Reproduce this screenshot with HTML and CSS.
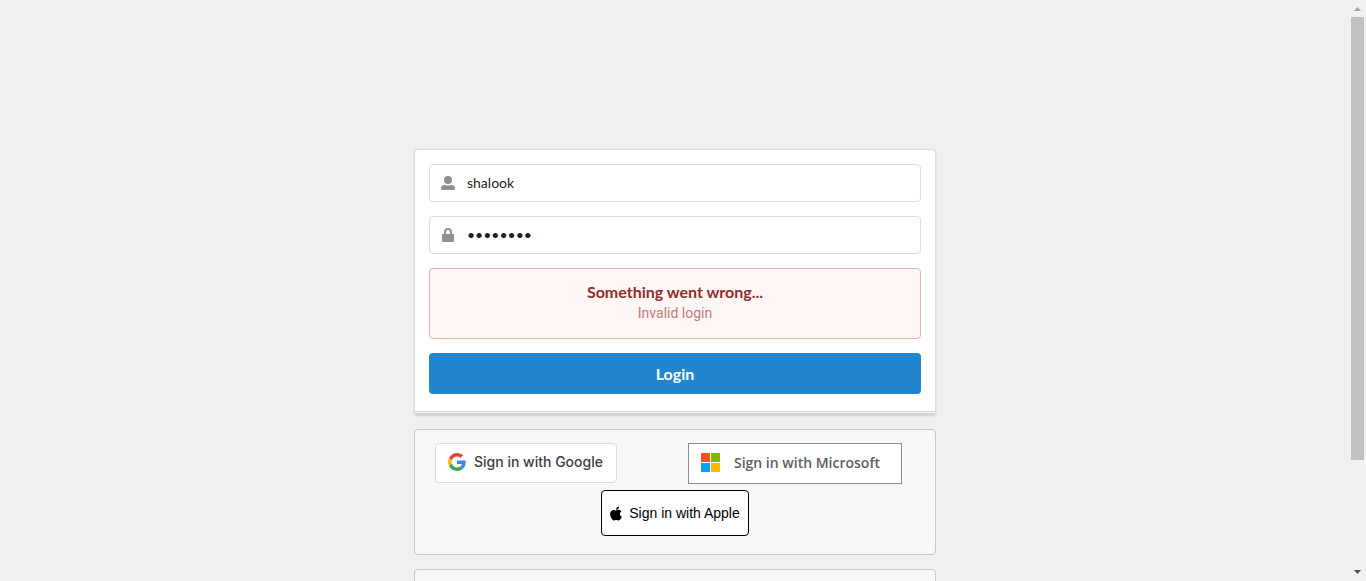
FILE: index.html
```html
<!DOCTYPE html>
<html lang="en">
<head>
<meta charset="utf-8">
<title>Login</title>
<meta name="viewport" content="width=device-width, initial-scale=1">
<link rel="stylesheet" href="styles.css">
</head>
<body>
<main class="column">
  <form class="card">
    <div class="fields">
      <label class="field">
        <svg class="field-icon" viewBox="0 0 14 14" aria-hidden="true"><circle cx="7" cy="4" r="4"/><path d="M3.500 9h1c1.500.7 3.500.7 5 0h1A3.500 3.500 0 0 1 14 12.500c0 .9-.5 1.500-1.300 1.500H1.300C.5 14 0 13.400 0 12.500A3.500 3.500 0 0 1 3.500 9z"/></svg>
        <input class="input" type="text" aria-label="Username" value="shalook">
      </label>
      <label class="field">
        <svg class="field-icon" viewBox="0 0 14 14" aria-hidden="true"><path fill-rule="evenodd" d="M3 6V4a4 4 0 0 1 8 0v2h.7c.8 0 1.300.5 1.300 1.300v5.400c0 .8-.5 1.300-1.300 1.300H2.300C1.500 14 1 13.500 1 12.700V7.300C1 6.500 1.500 6 2.300 6zM5 6h4V4a2 2 0 0 0-4 0z"/></svg>
        <input class="input" type="password" aria-label="Password" value="password">
      </label>
      <div class="message" role="alert">
        <div class="message-title">Something went wrong...</div>
        <p class="message-text">Invalid login</p>
      </div>
      <button class="login" type="button">Login</button>
    </div>
    <div class="card-foot"></div>
  </form>
  <section class="panel" aria-label="Other sign in options">
    <div class="providers">
      <button class="google" type="button">
        <svg class="google-logo" viewBox="0 0 48 48" aria-hidden="true"><path fill="#ea4335" d="M24 9.500c3.540 0 6.710 1.220 9.210 3.600l6.850-6.850C35.900 2.380 30.470 0 24 0 14.620 0 6.510 5.380 2.560 13.220l7.980 6.190C12.430 13.720 17.740 9.500 24 9.500z"/><path fill="#4285f4" d="M46.980 24.550c0-1.570-.15-3.090-.38-4.550H24v9.020h12.940c-.58 2.960-2.260 5.480-4.780 7.180l7.730 6c4.510-4.180 7.090-10.360 7.090-17.650z"/><path fill="#fbbc05" d="M10.530 28.590A14.500 14.500 0 0 1 9.770 24c0-1.600.27-3.140.76-4.590l-7.980-6.190A23.900 23.900 0 0 0 0 24c0 3.880.92 7.540 2.560 10.780z"/><path fill="#34a853" d="M24 48c6.480 0 11.930-2.130 15.890-5.810l-7.730-6c-2.150 1.450-4.920 2.300-8.160 2.300-6.260 0-11.570-4.220-13.470-9.910l-7.980 6.190C6.510 42.620 14.620 48 24 48z"/></svg>
        <span>Sign in with Google</span>
      </button>
      <button class="microsoft" type="button">
        <svg class="microsoft-logo" viewBox="0 0 19 19" aria-hidden="true"><path fill="#f25022" d="M0 0h9v9H0z"/><path fill="#7fba00" d="M10 0h9v9h-9z"/><path fill="#00a4ef" d="M0 10h9v9H0z"/><path fill="#ffb900" d="M10 10h9v9h-9z"/></svg>
        <span>Sign in with Microsoft</span>
      </button>
    </div>
    <button class="apple" type="button">
      <svg class="apple-logo" viewBox="0 0 384 470" aria-hidden="true"><path d="M318.700 247.700c-.2-36.700 16.400-64.400 50-84.800-18.800-26.900-47.200-41.700-84.700-44.600-35.500-2.800-74.300 20.700-88.500 20.700-15 0-49.400-19.700-76.400-19.700C63.300 120.200 4 163.800 4 252.500q0 39.300 14.400 81.200c12.800 36.700 59 126.700 107.200 125.200 25.200-.6 43-17.900 75.800-17.900 31.800 0 48.300 17.900 76.400 17.900 48.600-.7 90.400-82.500 102.600-119.300-65.200-30.700-61.700-90-61.700-91.900zM262.100 83.500c27.300-32.400 24.800-61.900 24-72.500-24.100 1.400-52 16.400-67.900 34.900-17.500 19.800-27.800 44.300-25.600 71.900 26.100 2 49.900-11.400 69.500-34.300z"/></svg>
      <span>Sign in with Apple</span>
    </button>
  </section>
  <section class="panel"></section>
</main>
<div class="scrollbar" aria-hidden="true">
  <svg class="arrow" viewBox="0 0 15 17"><path fill="#a3a3a3" d="M3 11h7L6.500 7z"/></svg>
  <div class="track"><div class="thumb"></div></div>
  <svg class="arrow" viewBox="0 0 15 17"><path fill="#505050" d="M3 6h7l-3.500 4z"/></svg>
</div>
</body>
</html>
```
FILE: styles.css
```css
* { box-sizing: border-box; }
body {
  margin: 0;
  height: 100vh;
  overflow: hidden;
  padding: 149px 16px 0 0;
  background: #f0f0f0;
  font: 14px/20px Lato, sans-serif;
  color: #212121;
}
button { font: inherit; cursor: pointer; }
.column {
  max-width: 522px;
  margin: 0 auto;
  display: flex;
  flex-direction: column;
  gap: 14px;
}
.card {
  background: #fff;
  border: 1px solid #dcdcdc;
  border-bottom: 2px solid #d4d4d5;
  border-radius: 4px;
  box-shadow: 0 1px 2px #22242626;
}
.fields {
  padding: 14px 14px 17px;
  display: flex;
  flex-direction: column;
  gap: 14px;
}
.card-foot { height: 2px; border-top: 1px solid #d4d4d5; background: #f8f8f8; }
.field {
  display: flex;
  align-items: center;
  height: 38px;
  padding-left: 11px;
  border: 1px solid #dedede;
  border-radius: 4px;
}
.field-icon { width: 14px; height: 14px; fill: #919191; flex: none; }
.input {
  flex: 1;
  min-width: 0;
  height: 36px;
  padding: 0 12px 2px;
  border: 0;
  outline: 0;
  background: transparent;
  font: 14px/20px Lato, sans-serif;
  color: #212121;
}
.message {
  padding: 13px 20px;
  text-align: center;
  color: #912d2b;
  background: #fff6f6;
  border: 1px solid #e0b4b4;
  border-radius: 4px;
}
.message-title { font-size: 16px; line-height: 20px; font-weight: 700; }
.message-text { margin: 0; line-height: 23px; font-family: Roboto, sans-serif; color: #c27a79; }
.login {
  height: 41px;
  border: 0;
  border-radius: 4px;
  background: #2185d0;
  color: #fff;
  font-size: 16px;
  font-weight: 700;
}
.panel {
  min-height: 126px;
  padding: 13px 20px 18px;
  background: #f8f8f8;
  border: 1px solid #c9c9ca;
  border-radius: 4px;
}
.providers {
  display: flex;
  justify-content: space-between;
  flex-wrap: wrap;
  padding-right: 13px;
}
.google, .microsoft, .apple { display: flex; align-items: center; background: #fff; }
.google {
  height: 40px;
  padding: 0 13px 2px 12px;
  gap: 8px;
  border: 1px solid #dadce0;
  border-radius: 4px;
  color: #3c4043;
  font: 500 14px/20px Inter, sans-serif;
}
.google-logo { width: 18px; height: 18px; }
.microsoft {
  height: 41px;
  padding: 0 21px 2px 12px;
  gap: 14px;
  border: 1px solid #8c8c8c;
  color: #5e5e5e;
  font: 600 14px/20px "Open Sans", sans-serif;
}
.microsoft-logo { width: 19px; height: 19px; }
.apple {
  height: 46px;
  margin: 6px auto 0;
  padding: 0 8px;
  gap: 7px;
  border: 1px solid #000;
  border-radius: 4px;
  color: #000;
  font: 14px/20px "Liberation Sans", sans-serif;
}
.apple-logo { width: 12px; height: 15px; }
.scrollbar {
  position: fixed;
  inset: 0 0 0 auto;
  width: 15px;
  display: flex;
  flex-direction: column;
  background: #f1f1f1;
}
.arrow { width: 15px; height: 17px; flex: none; }
.track { flex: 1; }
.thumb { width: 13px; height: 81%; background: #c1c1c1; }
```
